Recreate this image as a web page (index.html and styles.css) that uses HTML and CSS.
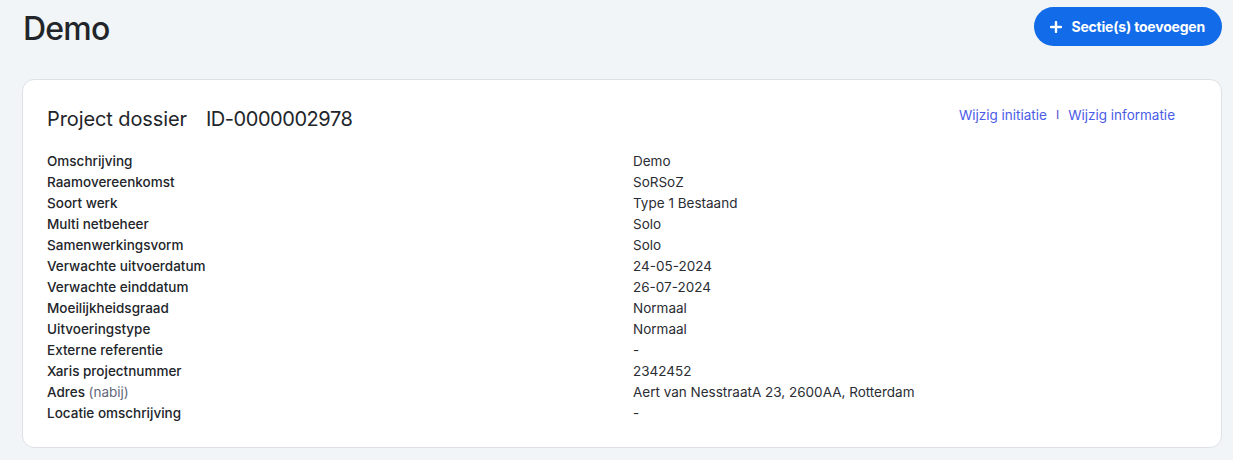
FILE: index.html
```html
<!DOCTYPE html>
<html lang="nl">
<head>
<meta charset="utf-8">
<title>Demo</title>
<link rel="stylesheet" href="styles.css">
</head>
<body>
<div class="page">
  <header class="page-header">
    <h1 class="page-title">Demo</h1>
    <button class="btn-primary" type="button">
      <svg class="btn-icon" viewBox="0 0 12 12" width="12" height="12" aria-hidden="true"><path d="M6 1v10M1 6h10" stroke="#fff" stroke-width="2.4" stroke-linecap="round"/></svg>
      <span>Sectie(s) toevoegen</span>
    </button>
  </header>
  <section class="card">
    <div class="card-head">
      <h2 class="card-title"><span>Project dossier</span><span class="card-id">ID-0000002978</span></h2>
      <div class="card-links">
        <a href="#" class="link">Wijzig initiatie</a>
        <span class="sep">I</span>
        <a href="#" class="link">Wijzig informatie</a>
      </div>
    </div>
    <dl class="details">
      <dt>Omschrijving</dt><dd>Demo</dd>
      <dt>Raamovereenkomst</dt><dd>SoRSoZ</dd>
      <dt>Soort werk</dt><dd>Type 1 Bestaand</dd>
      <dt>Multi netbeheer</dt><dd>Solo</dd>
      <dt>Samenwerkingsvorm</dt><dd>Solo</dd>
      <dt>Verwachte uitvoerdatum</dt><dd>24-05-2024</dd>
      <dt>Verwachte einddatum</dt><dd>26-07-2024</dd>
      <dt>Moeilijkheidsgraad</dt><dd>Normaal</dd>
      <dt>Uitvoeringstype</dt><dd>Normaal</dd>
      <dt>Externe referentie</dt><dd>-</dd>
      <dt>Xaris projectnummer</dt><dd>2342452</dd>
      <dt>Adres <span class="muted">(nabij)</span></dt><dd>Aert van NesstraatA 23, 2600AA, Rotterdam</dd>
      <dt>Locatie omschrijving</dt><dd>-</dd>
    </dl>
  </section>
</div>
</body>
</html>
```

FILE: styles.css
```css
* { box-sizing: border-box; }
html, body {
  margin: 0;
  padding: 0;
  background: #f2f5f8;
  font-family: Inter, "Noto Sans", "Liberation Sans", sans-serif;
  color: #1f2328;
}
.page {
  padding: 7px 11px 0 22px;
}
.page-header {
  display: flex;
  justify-content: space-between;
  align-items: flex-start;
  height: 72px;
}
.page-title {
  margin: 4px 0 0 1px;
  font-size: 32px;
  font-weight: 500;
  letter-spacing: -0.8px;
  line-height: 36px;
  color: #22252a;
}
.btn-primary {
  display: flex;
  align-items: center;
  gap: 9px;
  height: 39px;
  padding: 0 17px 0 16px;
  border: none;
  border-radius: 20px;
  background: #126be8;
  color: #fff;
  font-family: inherit;
  font-size: 14px;
  font-weight: 700;
  letter-spacing: -0.2px;
  cursor: pointer;
}
.btn-icon { display: block; }
.card {
  background: #fff;
  border: 1px solid #dde1e6;
  border-radius: 12px;
  padding: 26px 24px 23px 24px;
  width: 1200px;
}
.card-head {
  display: flex;
  justify-content: space-between;
  align-items: center;
  height: 27px;
  margin-bottom: 18px;
}
.card-title {
  margin: 0;
  display: flex;
  gap: 19px;
  font-size: 20px;
  font-weight: 400;
  line-height: 25px;
  color: #22252a;
  letter-spacing: -0.1px;
}
.card-id {
  letter-spacing: -0.45px;
}
.card-links {
  display: flex;
  align-items: center;
  gap: 9px;
  margin-right: 22px;
  margin-top: -10px;
  font-size: 13.5px;
}
.link {
  color: #4b5ce6;
  text-decoration: none;
}
.sep {
  color: #5b48c9;
  font-size: 12px;
}
.details {
  display: grid;
  grid-template-columns: 586px 1fr;
  margin: 0;
  font-size: 13.5px;
  line-height: 21px;
}
.details dt {
  font-weight: 500;
  color: #22252a;
}
.details dd {
  margin: 0;
  color: #2a2d33;
}
.muted {
  color: #5f6778;
  font-weight: 400;
}
```
